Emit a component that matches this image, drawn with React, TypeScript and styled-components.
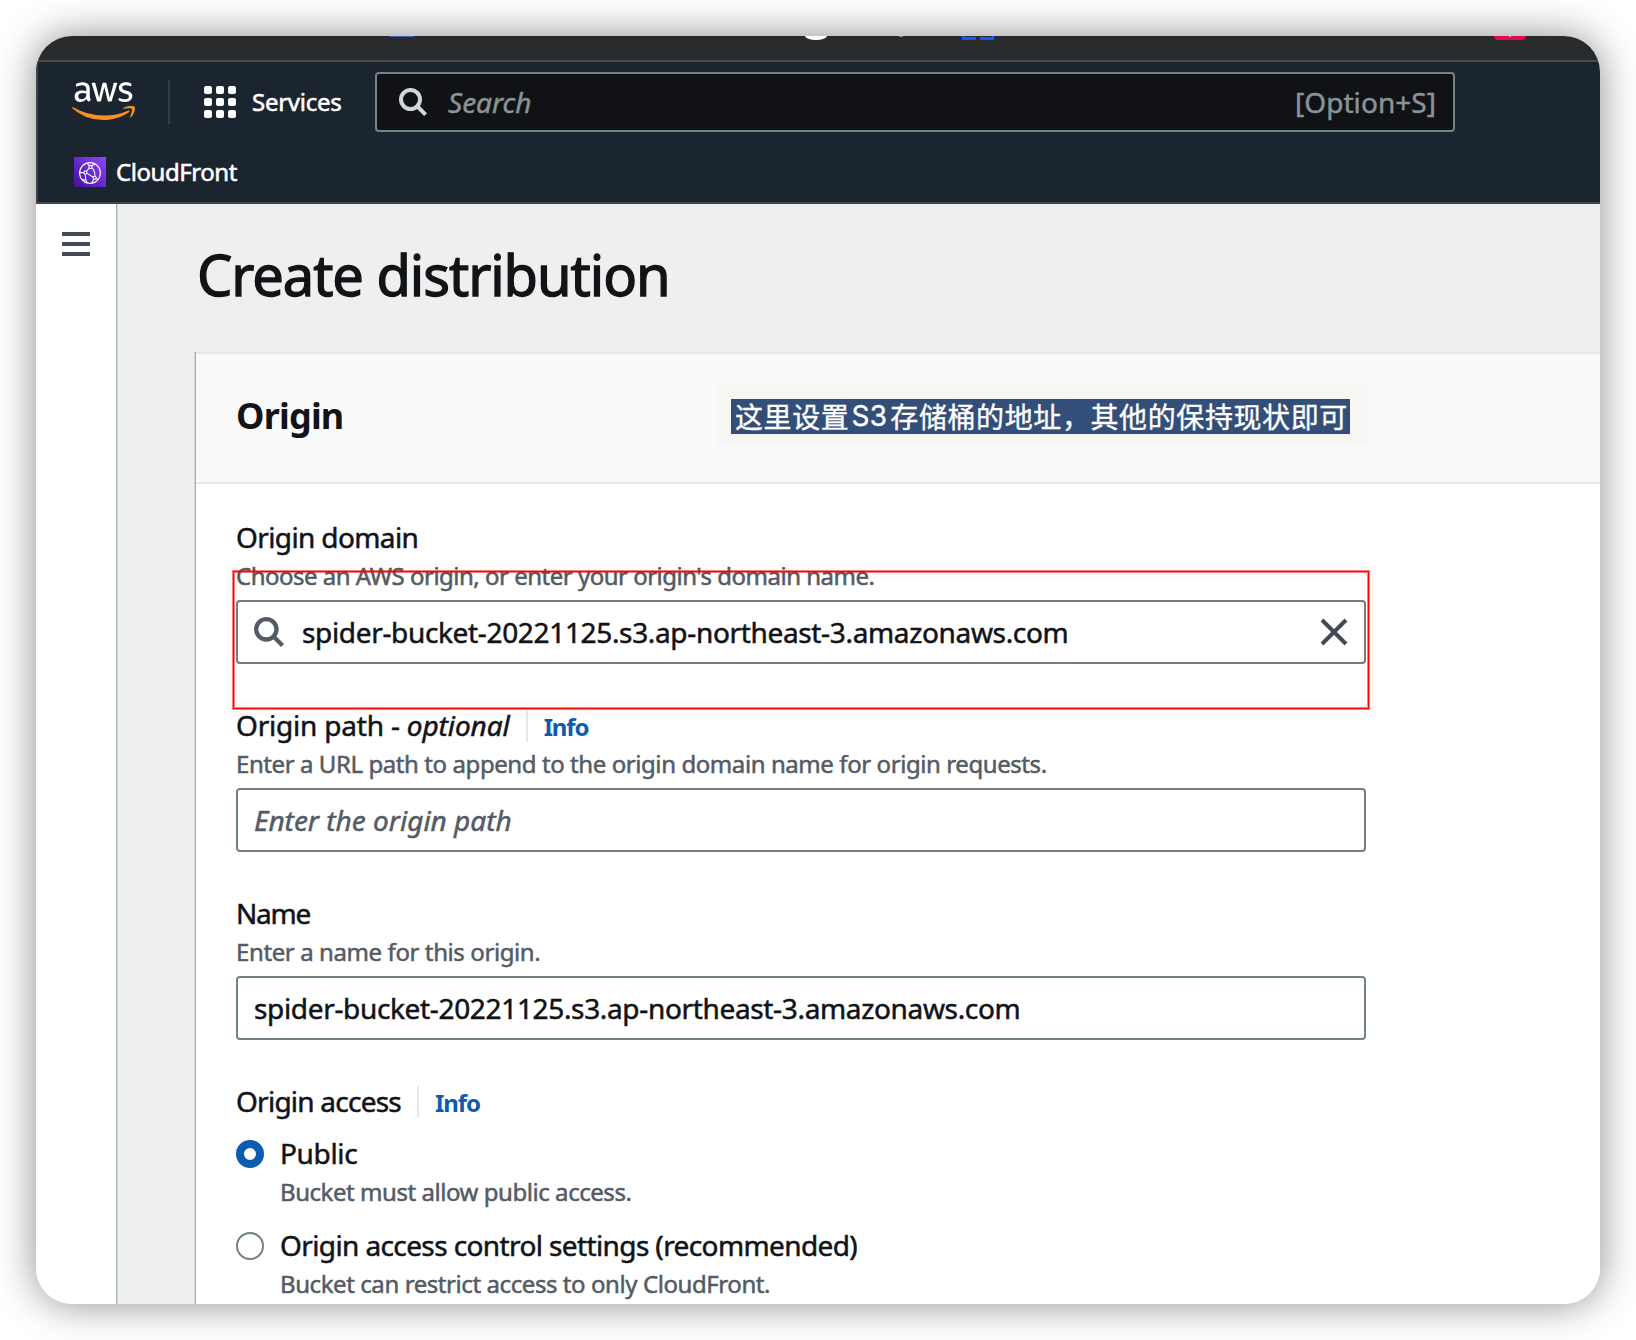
import React from "react";
import styled, { createGlobalStyle, css } from "styled-components";
import { FaAws } from "react-icons/fa";

const GlobalStyle = createGlobalStyle`
  * { box-sizing: border-box; }
  body {
    margin: 0;
    background: #fff;
    font-family: "Noto Sans", "Noto Sans CJK SC", sans-serif;
    color: #111317;
  }
`;

interface TypeProps {
  $track?: number;
}

const tracking = css<TypeProps>`
  letter-spacing: ${({ $track = 0 }) => $track}px;
  white-space: pre;
`;

const Stage = styled.div`
  width: 1636px;
  height: 1340px;
  padding: 36px;
  overflow: hidden;
`;

const Frame = styled.div`
  display: flex;
  flex-direction: column;
  width: 1564px;
  height: 1268px;
  border-radius: 36px;
  overflow: hidden;
  background: #fff;
  box-shadow: 0 0 40px rgba(0, 0, 0, 0.45);
`;

const TabStrip = styled.div`
  position: relative;
  flex: none;
  height: 26px;
  background: #292a2c;
  border-bottom: 2px solid #4b4b4d;
`;

const TabMark = styled.span<{ $x: number; $w: number; $h: number; $color: string; $radius?: string }>`
  position: absolute;
  top: 0;
  left: ${({ $x }) => $x}px;
  width: ${({ $w }) => $w}px;
  height: ${({ $h }) => $h}px;
  background: ${({ $color }) => $color};
  border-radius: ${({ $radius = "0" }) => $radius};
`;

const Header = styled.header`
  flex: none;
  height: 142px;
  background: #1b2530;
  border-left: 2px solid #3c444f;
  border-bottom: 2px solid #414853;
`;

const NavRow = styled.div`
  display: flex;
  align-items: center;
  height: 80px;
  padding-left: 34px;
`;

const LogoMark = styled.div`
  display: flex;
  width: 64px;
  height: 52px;
  svg {
    width: 63px;
    height: 50.4px;
  }
  svg path {
    fill: url(#logoInk);
  }
`;

const HiddenDefs = styled.svg`
  display: block;
  width: 0;
  height: 0;
`;

const NavDivider = styled.span`
  width: 2px;
  height: 44px;
  margin: 0 34px 0 32px;
  background: #353c48;
`;

const AppGrid = styled.span`
  display: grid;
  grid-template-columns: repeat(3, 8px);
  gap: 4px;
  i {
    height: 8px;
    border-radius: 2px;
    background: #fff;
  }
`;

const NavLabel = styled.span<TypeProps>`
  ${tracking}
  font-size: 24px;
  line-height: 32px;
  color: #fff;
  -webkit-text-stroke: 0.55px #fff;
`;

const ServicesLabel = styled(NavLabel)`
  width: 139px;
  padding-left: 16px;
`;

const SearchBar = styled.div`
  display: flex;
  align-items: center;
  width: 1080px;
  height: 60px;
  padding: 0 17px 0 22px;
  border: 2px solid #748483;
  border-radius: 4px;
  background: #111216;
  color: #879596;
  font-size: 28px;
  line-height: 56px;
  -webkit-text-stroke: 0.45px #879596;
`;

const SearchHint = styled.em<TypeProps>`
  ${tracking}
  flex: 1;
  padding-left: 21px;
`;

const Shortcut = styled.span<TypeProps>`
  ${tracking}
`;

const FavouriteRow = styled.div`
  display: flex;
  align-items: center;
  gap: 10px;
  height: 60px;
  padding: 0 0 5px 36px;
  margin-top: 2px;
`;

const Body = styled.div`
  display: flex;
  flex: 1;
  min-height: 0;
`;

const Rail = styled.nav`
  position: relative;
  z-index: 1;
  flex: none;
  width: 80px;
  padding: 28px 26px;
  background: #fff;
`;

const MenuButton = styled.div`
  display: flex;
  flex-direction: column;
  gap: 6px;
  i {
    height: 4px;
    background: #424b55;
  }
`;

const Main = styled.main`
  flex: 1;
  padding-left: 80px;
  background: #eef0f0;
  box-shadow: inset 1px 0 0 #aab3b5, inset 2px 0 0 #d3d8d9;
`;

const PageTitle = styled.h1<TypeProps>`
  ${tracking}
  height: 148px;
  margin: 0;
  padding: 32px 0 0 1px;
  font-size: 56px;
  font-weight: 400;
  line-height: 76px;
  -webkit-text-stroke: 1.3px #111317;
`;

const Card = styled.section`
  height: 960px;
  background: #fff;
  box-shadow: -1px 0 0 #a5afb1, -2px 0 0 #d3d8d9;
`;

const CardHeader = styled.div`
  position: relative;
  height: 132px;
  padding: 37px 40px;
  background: #fafafa;
  border-top: 2px solid #e5e9e9;
  border-bottom: 2px solid #e5e9e9;
`;

const CardTitle = styled.h2<TypeProps>`
  ${tracking}
  margin: 0;
  font-size: 36px;
  font-weight: 700;
  line-height: 50px;
`;

const Note = styled.div`
  position: absolute;
  top: 31px;
  left: 521px;
  padding: 14px 17px 12px 14px;
  background: #f8f6f3;
`;

const NoteText = styled.div`
  display: flex;
  align-items: center;
  width: 619px;
  height: 35px;
  padding-left: 4px;
  background: #334f79;
  color: #fff;
  font-family: "Noto Sans CJK SC", sans-serif;
  font-size: 28px;
  line-height: 35px;
  letter-spacing: 0.6px;
  white-space: nowrap;
  -webkit-text-stroke: 0.35px #fff;
  b {
    margin: 0 3px 0 2px;
    font-family: Inter, sans-serif;
    font-weight: 400;
    font-size: 28px;
    letter-spacing: 0.3px;
  }
`;

const Form = styled.div`
  display: flex;
  flex-direction: column;
  gap: 40px;
  width: 1210px;
  padding: 32px 40px 0;
`;

const Field = styled.div`
  position: relative;
  width: 1130px;
`;

const LabelRow = styled.div`
  display: flex;
  height: 44px;
`;

const Label = styled.span<TypeProps>`
  ${tracking}
  font-size: 28px;
  line-height: 42px;
  -webkit-text-stroke: 0.5px #111317;
`;

const Optional = styled.em<TypeProps>`
  ${tracking}
`;

const InfoLink = styled.a<TypeProps>`
  ${tracking}
  height: 32px;
  margin: 6px 0 0 16px;
  padding-left: 16px;
  border-left: 2px solid #e3e7e7;
  color: #0d5cb0;
  font-size: 24px;
  font-weight: 700;
  line-height: 34px;
`;

const Hint = styled.p<TypeProps>`
  ${tracking}
  margin: 0;
  color: #545b64;
  font-size: 24px;
  line-height: 32px;
  -webkit-text-stroke: 0.5px #545b64;
`;

const InputBox = styled.div<TypeProps & { $placeholder?: boolean }>`
  ${tracking}
  display: flex;
  align-items: center;
  height: 64px;
  margin-top: 8px;
  padding: 0 16px;
  border: 2px solid #728282;
  border-radius: 4px;
  background: #fff;
  font-size: 28px;
  line-height: 60px;
  color: ${({ $placeholder }) => ($placeholder ? "#545b64" : "#111317")};
  font-style: ${({ $placeholder }) => ($placeholder ? "italic" : "normal")};
  -webkit-text-stroke: 0.5px ${({ $placeholder }) => ($placeholder ? "#545b64" : "#111317")};
`;

const InputValue = styled.span`
  flex: 1;
  padding-left: 18px;
`;

const Highlight = styled.div`
  position: absolute;
  top: 55px;
  left: -3px;
  width: 1136px;
  height: 138px;
  border: 1px solid #fb0000;
  box-shadow: 0 0 0 1px rgba(255, 0, 0, 0.5), inset 0 0 0 1px rgba(255, 0, 0, 0.5),
    0 0 0 7px rgba(0, 0, 0, 0.012), inset 0 0 0 7px rgba(0, 0, 0, 0.012);
`;

const Options = styled.div`
  display: flex;
  flex-direction: column;
  gap: 16px;
  margin-top: 8px;
`;

const Option = styled.div`
  display: grid;
  grid-template-columns: 28px 1fr;
  column-gap: 16px;
`;

const Radio = styled.span<{ $on?: boolean }>`
  width: 28px;
  height: 28px;
  margin-top: 8px;
  border-radius: 50%;
  background: #fff;
  border: ${({ $on }) => ($on ? "8px solid #0d5cb0" : "2px solid #728282")};
`;

const OptionText = styled.div`
  display: flex;
  flex-direction: column;
  ${Label} {
    height: 44px;
  }
`;

function Magnifier({ size, color }: { size: number; color: string }) {
  return (
    <svg width={size} height={size} viewBox="0 0 28 28" fill="none" stroke={color} strokeWidth="4">
      <circle cx="11.5" cy="11.5" r="9.5" />
      <path d="M18 18l8.6 8.6" />
    </svg>
  );
}

function CloseMark() {
  return (
    <svg width="28" height="28" viewBox="0 0 28 28" stroke="#424a53" strokeWidth="4">
      <path d="M2 2l24 24M26 2L2 26" />
    </svg>
  );
}

function CloudFrontMark() {
  return (
    <svg width="32" height="30" viewBox="0 0 32 30" fill="none" stroke="#fff" strokeWidth="1.1">
      <defs>
        <linearGradient id="cfFill" x1="0" y1="1" x2="1" y2="0">
          <stop offset="0" stopColor="#41109a" />
          <stop offset="1" stopColor="#8d46ff" />
        </linearGradient>
      </defs>
      <rect width="32" height="30" fill="url(#cfFill)" stroke="none" />
      <circle cx="16" cy="16" r="10.4" />
      <circle cx="16.4" cy="10" r="1.6" />
      <circle cx="11.4" cy="15.6" r="1.6" />
      <circle cx="20.6" cy="20.8" r="1.6" />
      <path d="M6 15.6h3.8M12.4 14.2l3-3M13 16.4l6 3.6M18 10.6c2.4 2.4 3 5.4 3 8.6M15.4 8.6L13 6.2M17.6 8.8l3.4-1.6M11.2 17.4c0 2.8.6 5.6 1.8 8M8 22.600l4 .6M22 21.600l2.4.8M19.8 22.200l-2 3.800" />
    </svg>
  );
}

const bucketHost = "spider-bucket-20221125.s3.ap-northeast-3.amazonaws.com";

export default function App() {
  return (
    <Stage>
      <GlobalStyle />
      <Frame>
        <TabStrip>
          <TabMark $x={354} $w={24} $h={1} $color="#3f62b5" />
          <TabMark $x={769} $w={22} $h={4} $color="#fff" $radius="0 0 11px 11px / 0 0 4px 4px" />
          <TabMark $x={863} $w={4} $h={1} $color="#8a8a8c" />
          <TabMark $x={926} $w={14} $h={4} $color="#0d5bff" $radius="0 0 1px 1px" />
          <TabMark $x={928} $w={12} $h={1} $color="#292a2c" />
          <TabMark $x={944} $w={14} $h={4} $color="#0d5bff" $radius="0 0 1px 1px" />
          <TabMark $x={944} $w={12} $h={1} $color="#292a2c" />
          <TabMark $x={1458} $w={32} $h={4} $color="#e6084e" $radius="0 0 4px 4px" />
          <TabMark $x={1473} $w={2} $h={1} $color="#8fb4e8" />
        </TabStrip>

        <Header>
          <HiddenDefs>
            <defs>
              <linearGradient id="logoInk" x1="0" y1="0" x2="0" y2="1">
                <stop offset="0.59" stopColor="#fff" />
                <stop offset="0.59" stopColor="#f7901e" />
              </linearGradient>
            </defs>
          </HiddenDefs>
          <NavRow>
            <LogoMark>
              <FaAws />
            </LogoMark>
            <NavDivider />
            <AppGrid>
              {Array.from({ length: 9 }, (_, i) => (
                <i key={i} />
              ))}
            </AppGrid>
            <ServicesLabel $track={-0.25}>Services</ServicesLabel>
            <SearchBar>
              <Magnifier size={28} color="#d0d6d6" />
              <SearchHint $track={0}>Search</SearchHint>
              <Shortcut $track={0.05}>[Option+S]</Shortcut>
            </SearchBar>
          </NavRow>
          <FavouriteRow>
            <CloudFrontMark />
            <NavLabel $track={-0.45}>CloudFront</NavLabel>
          </FavouriteRow>
        </Header>

        <Body>
          <Rail>
            <MenuButton>
              <i />
              <i />
              <i />
            </MenuButton>
          </Rail>
          <Main>
            <PageTitle $track={-1.05}>Create distribution</PageTitle>
            <Card>
              <CardHeader>
                <CardTitle $track={-0.8}>Origin</CardTitle>
                <Note>
                  <NoteText>
                    这里设置<b>S3</b>存储桶的地址，其他的保持现状即可
                  </NoteText>
                </Note>
              </CardHeader>
              <Form>
                <Field>
                  <LabelRow>
                    <Label $track={-0.62}>Origin domain</Label>
                  </LabelRow>
                  <Hint $track={-0.5}>Choose an AWS origin, or enter your origin's domain name.</Hint>
                  <InputBox $track={-0.34}>
                    <Magnifier size={30} color="#545b64" />
                    <InputValue>{bucketHost}</InputValue>
                    <CloseMark />
                  </InputBox>
                  <Highlight />
                </Field>

                <Field>
                  <LabelRow>
                    <Label $track={-0.2}>
                      Origin path - <Optional $track={-0.1}>optional</Optional>
                    </Label>
                    <InfoLink $track={-1.1}>Info</InfoLink>
                  </LabelRow>
                  <Hint $track={-0.42}>
                    Enter a URL path to append to the origin domain name for origin requests.
                  </Hint>
                  <InputBox $placeholder $track={0}>
                    Enter the origin path
                  </InputBox>
                </Field>

                <Field>
                  <LabelRow>
                    <Label $track={-1.2}>Name</Label>
                  </LabelRow>
                  <Hint $track={-0.4}>Enter a name for this origin.</Hint>
                  <InputBox $track={-0.34}>{bucketHost}</InputBox>
                </Field>

                <Field>
                  <LabelRow>
                    <Label $track={-0.76}>Origin access</Label>
                    <InfoLink $track={-1.1}>Info</InfoLink>
                  </LabelRow>
                  <Options>
                    <Option>
                      <Radio $on />
                      <OptionText>
                        <Label $track={-0.35}>Public</Label>
                        <Hint $track={-0.45}>Bucket must allow public access.</Hint>
                      </OptionText>
                    </Option>
                    <Option>
                      <Radio />
                      <OptionText>
                        <Label $track={-0.61}>Origin access control settings (recommended)</Label>
                        <Hint $track={-0.42}>Bucket can restrict access to only CloudFront.</Hint>
                      </OptionText>
                    </Option>
                  </Options>
                </Field>
              </Form>
            </Card>
          </Main>
        </Body>
      </Frame>
    </Stage>
  );
}
